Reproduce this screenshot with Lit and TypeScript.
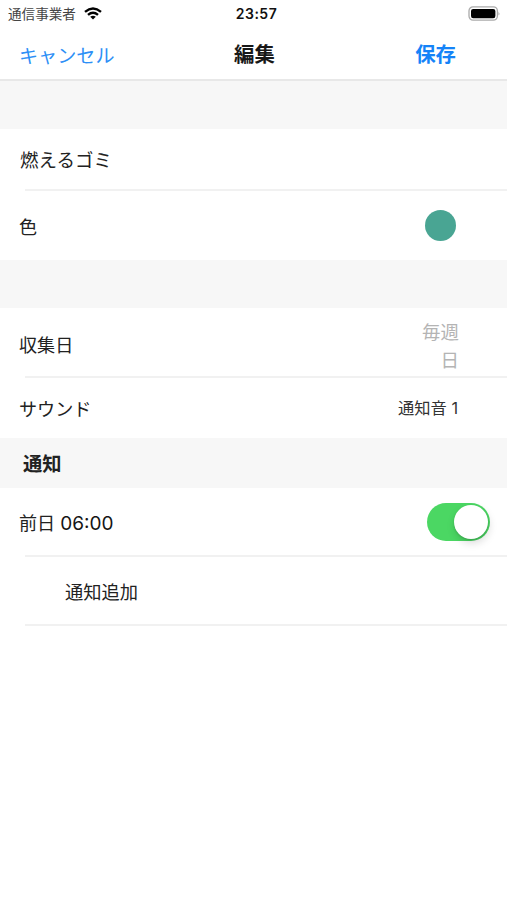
import { LitElement, html, css } from "lit";
import { customElement, state } from "lit/decorators.js";

@customElement("app-root")
export class AppRoot extends LitElement {
  @state() private enabled = true;

  static styles = css`
    :host {
      display: block;
      width: 507px;
      height: 900px;
      overflow: hidden;
      background: #fff;
      color: #222;
      font-family: Inter, "Noto Sans CJK JP", sans-serif;
      font-size: 18.1px;
      line-height: 28px;
      white-space: nowrap;
    }
    .row, .carrier { display: flex; align-items: center; }
    .bar, .nav { display: grid; align-items: center; }
    .bar { grid-template-columns: 1fr auto 1fr; height: 28px; box-sizing: border-box; padding: 0 7px 2px 8px; }
    .carrier { font-size: 13.6px; color: #444; gap: 8px; }
    .wifi { width: 18px; height: 13px; margin-top: -2px; }
    .time { font-size: 14px; font-weight: 600; color: #111; letter-spacing: 0.5px; padding-left: 5px; }
    .battery { width: 32px; height: 15px; justify-self: end; margin-top: -2px; }
    .nav {
      grid-template-columns: 215px auto 1fr;
      height: 53px;
      box-sizing: border-box;
      padding: 2px 51px 0 19px;
      border-bottom: 2px solid #e8e8e8;
    }
    .cancel { font-size: 19.1px; color: #2d8ff6; padding-top: 2px; }
    .title { font-size: 20.4px; font-weight: 700; color: #181818; }
    .save { font-size: 20.4px; font-weight: 700; color: #1583f8; justify-self: end; }
    .gap { background: #f7f7f7; height: 48px; }
    .heading {
      height: 50px;
      line-height: 53px;
      box-sizing: border-box;
      padding-left: 23px;
      background: #f7f7f7;
      font-size: 19.3px;
      font-weight: 700;
    }
    .row { box-sizing: border-box; justify-content: space-between; padding: 0 48px 0 19px; }
    .line { height: 2px; margin-left: 25px; background: #f1f1f1; }
    .name { height: 60px; padding-left: 20px; padding-top: 2px; font-size: 18.5px; }
    .color { height: 69px; padding-right: 51px; }
    .color span:first-child { padding-top: 2px; }
    .days { height: 68px; padding-top: 5px; }
    .sound { height: 60px; padding-top: 2px; }
    .notice { height: 67px; padding-right: 17px; padding-top: 3px; }
    .add { height: 67px; padding-left: 65px; padding-top: 3px; font-size: 18.3px; }
    .dot { width: 31px; height: 31px; border-radius: 50%; background: #49a593; }
    .value { padding-top: 4px; color: #b4b4b4; text-align: right; font-size: 18.5px; line-height: 27.5px; }
    .tone { color: #333; font-size: 16.3px; padding-bottom: 2px; margin-right: 1px; }
    .clock { font-size: 19px; color: #151515; }
    .switch {
      width: 63px;
      height: 38px;
      box-sizing: border-box;
      padding: 2px;
      margin-top: -2px;
      border: 0;
      border-radius: 19px;
      background: #dedede;
      display: flex;
    }
    .switch.on { justify-content: flex-end; background: #4bd763; }
    .knob { width: 34px; height: 34px; border-radius: 50%; background: #fff; box-shadow: 1px 4px 8px rgba(0, 0, 0, 0.15), 0 1px 2px rgba(0, 0, 0, 0.15); }
  `;

  render() {
    return html`
      <div class="bar">
        <div class="carrier">
          <span>通信事業者</span>
          <svg class="wifi" viewBox="0 0 18 13">
            <g fill="none" stroke="#000" stroke-width="2.4">
              <path d="M1 4.8Q9 -1.9 17 4.8"></path>
              <path d="M4 7.9Q9 3.7 14 7.9"></path>
            </g>
            <path d="M6.2 9.8Q9 7.6 11.8 9.8L9 12.6Z"></path>
          </svg>
        </div>
        <div class="time">23:57</div>
        <svg class="battery" viewBox="0 0 32 15">
          <rect x="1" y="0.9" width="28.4" height="13.2" rx="4" fill="#fff" stroke="#aaa" stroke-width="1.3"></rect>
          <rect x="3" y="2.9" width="24.4" height="9.4" rx="2.2"></rect>
          <path d="M30.6 5.5Q32 7.5 30.6 9.5Z" fill="#888"></path>
        </svg>
      </div>
      <div class="nav">
        <span class="cancel">キャンセル</span>
        <span class="title">編集</span>
        <span class="save">保存</span>
      </div>
      <div class="gap"></div>
      <div class="row name">燃えるゴミ</div>
      <div class="line"></div>
      <div class="row color"><span>色</span><span class="dot"></span></div>
      <div class="gap"></div>
      <div class="row days"><span>収集日</span><span class="value">毎週<br />日</span></div>
      <div class="line"></div>
      <div class="row sound"><span>サウンド</span><span class="tone">通知音 1</span></div>
      <div class="heading">通知</div>
      <div class="row notice">
        <span>前日 <span class="clock">06:00</span></span>
        <button class="switch ${this.enabled ? "on" : ""}" @click=${() => (this.enabled = !this.enabled)}>
          <span class="knob"></span>
        </button>
      </div>
      <div class="line"></div>
      <div class="row add">通知追加</div>
      <div class="line"></div>
    `;
  }
}
